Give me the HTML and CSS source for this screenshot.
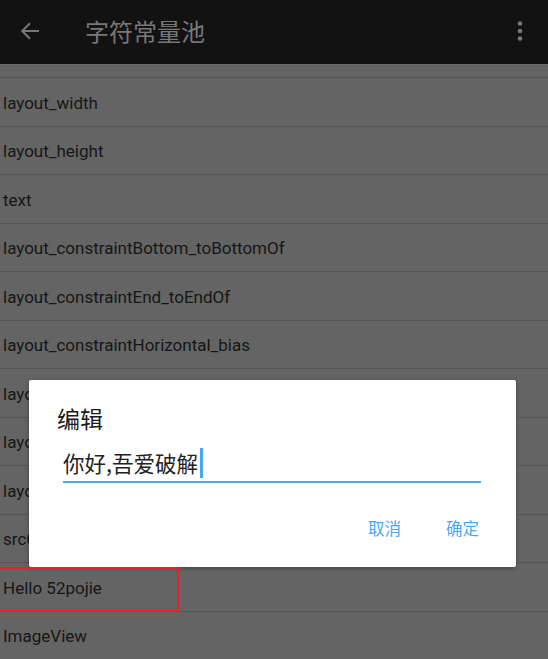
FILE: index.html
```html
<!DOCTYPE html>
<html lang="zh-CN">
<head>
<meta charset="utf-8">
<title>字符常量池</title>
<link rel="stylesheet" href="styles.css">
</head>
<body>
<div class="screen">
  <header class="toolbar">
    <svg class="back" width="20" height="20" viewBox="0 0 20 20"><path d="M19 10H2.5M10 2.2L2.2 10 10 17.8" fill="none" stroke="#787878" stroke-width="2"/></svg>
    <div class="title">字符常量池</div>
    <svg class="more" width="6" height="20" viewBox="0 0 6 20"><circle cx="3" cy="2.5" r="2.3" fill="#787878"/><circle cx="3" cy="10" r="2.3" fill="#787878"/><circle cx="3" cy="17.5" r="2.3" fill="#787878"/></svg>
  </header>
  <ul class="list">
    <li class="row">layout_width</li>
    <li class="row">layout_height</li>
    <li class="row">text</li>
    <li class="row">layout_constraintBottom_toBottomOf</li>
    <li class="row">layout_constraintEnd_toEndOf</li>
    <li class="row">layout_constraintHorizontal_bias</li>
    <li class="row">layout_constraintStart_toStartOf</li>
    <li class="row">layout_constraintTop_toTopOf</li>
    <li class="row">layout_constraintVertical_bias</li>
    <li class="row">srcCompat</li>
    <li class="row marked">Hello 52pojie<span class="mark"></span></li>
    <li class="row">ImageView</li>
  </ul>
  <div class="dialog">
    <div class="dlg-title">编辑</div>
    <div class="field">
      <span class="field-text">你好,吾爱破解</span><span class="caret"></span>
    </div>
    <div class="actions">
      <span class="btn">取消</span>
      <span class="btn">确定</span>
    </div>
  </div>
</div>
</body>
</html>
```

FILE: styles.css
```css
html, body {
  margin: 0;
  padding: 0;
}
body {
  width: 548px;
  height: 659px;
  overflow: hidden;
  background: #646464;
  font-family: Roboto, "Noto Sans CJK SC", sans-serif;
}
.screen {
  position: relative;
  width: 548px;
  height: 659px;
  overflow: hidden;
}
.toolbar {
  height: 65px;
  background: #121212;
  display: flex;
  align-items: center;
  padding: 0 0 2px 20px;
  box-sizing: border-box;
  border-bottom: 1px solid #6c6c6c;
}
.back {
  flex: none;
}
.title {
  margin-left: 45px;
  font-family: "Noto Sans CJK SC", sans-serif;
  font-size: 24px;
  line-height: 28px;
  color: #787878;
  flex: 1;
}
.more {
  flex: none;
  margin-right: 25px;
}
.list {
  list-style: none;
  margin: 0;
  padding: 12px 0 0 0;
  display: flex;
  flex-direction: column;
}
.row {
  position: relative;
  height: 48.5px;
  flex: none;
  box-sizing: border-box;
  border-top: 1px solid #575757;
  display: flex;
  align-items: center;
  padding: 2px 0 0 3px;
  font-size: 17px;
  color: #161616;
  white-space: nowrap;
}
.mark {
  position: absolute;
  z-index: 5;
  left: -3px;
  top: 4px;
  width: 182px;
  height: 45px;
  box-sizing: border-box;
  border: 2px solid #e8202a;
}
.dialog {
  position: absolute;
  left: 29px;
  top: 380px;
  width: 487px;
  height: 187px;
  box-sizing: border-box;
  background: #ffffff;
  border-radius: 2px;
  box-shadow: 0 1px 4px rgba(0, 0, 0, 0.35);
  padding: 25px 35px 0 28px;
  font-family: "Noto Sans CJK SC", sans-serif;
}
.dlg-title {
  font-size: 23px;
  line-height: 27px;
  color: #1a1a1a;
}
.field {
  margin: 20px 0 0 6px;
  display: flex;
  align-items: center;
  padding-bottom: 7px;
  border-bottom: 2px solid #48a8f2;
}
.field-text {
  font-size: 21.5px;
  line-height: 22px;
  color: #222222;
}
.caret {
  width: 3px;
  height: 30px;
  margin: -4px 0 -4px 2px;
  background: #48a8f2;
}
.actions {
  margin-top: 37px;
  display: flex;
  justify-content: flex-end;
  gap: 45px;
  padding-right: 2px;
}
.btn {
  font-size: 16.5px;
  line-height: 17px;
  color: #48a8f2;
}
```
